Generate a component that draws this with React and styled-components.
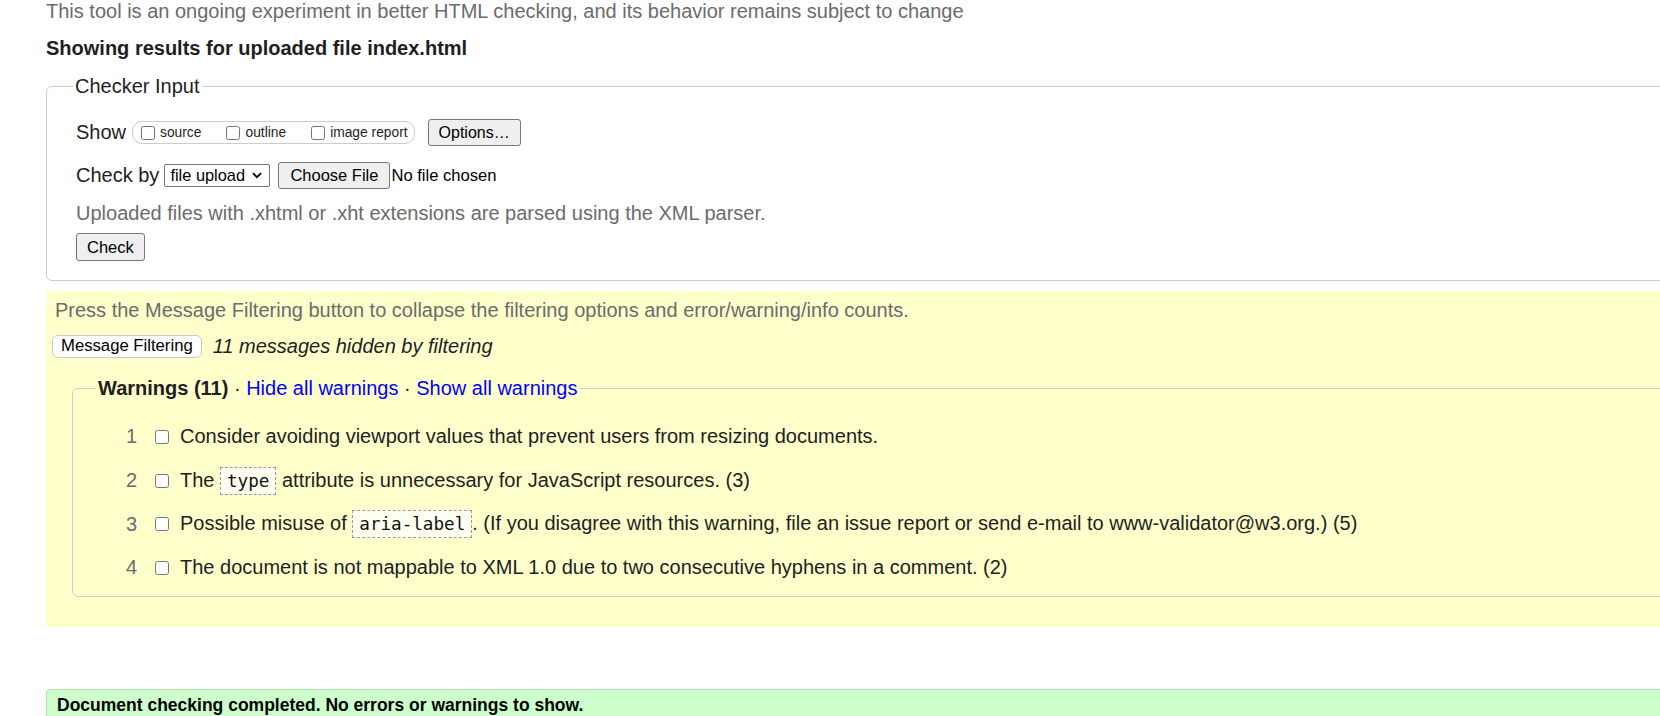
import React from "react";
import styled, { createGlobalStyle } from "styled-components";

const GlobalStyle = createGlobalStyle`
  html, body {
    margin: 0;
    padding: 0;
    background: #fff;
    overflow: hidden;
  }
  body {
    font-family: "Liberation Sans", Arial, sans-serif;
    color: #222;
  }
`;

const Page = styled.div`
  width: 1760px;
  padding-left: 46px;
`;

const Intro = styled.p`
  margin: 0;
  font-size: 20px;
  line-height: 23px;
  color: #6b6b6b;
`;

const Details = styled.p`
  margin: 14px 0 0;
  font-size: 20px;
  line-height: 23px;
  font-weight: bold;
  color: #1e1e1e;
`;

const Fieldset = styled.fieldset`
  margin: ${({ $mt }) => $mt || 0}px 0 0 ${({ $ml }) => $ml || 0}px;
  min-width: 0;
  border: 1px solid #ccc;
  border-radius: 6px;
  padding: 0 0 ${({ $pb }) => $pb}px ${({ $pl }) => $pl}px;
`;

const Legend = styled.legend`
  font-size: 20px;
  line-height: 23px;
  padding: 0 2px;
  margin-left: -3px;
  color: #1e1e1e;
  white-space: pre;
  font-weight: ${({ $bold }) => ($bold ? "bold" : "normal")};
`;

const Row = styled.div`
  display: flex;
  align-items: center;
  height: ${({ $h }) => $h || 27}px;
  margin-top: ${({ $mt }) => $mt || 0}px;
  font-size: 20px;
  color: #1e1e1e;
  white-space: nowrap;
`;

const Muted = styled.span`
  color: #6b6b6b;
`;

const ShowGroup = styled.span`
  display: inline-flex;
  align-items: center;
  box-sizing: border-box;
  height: 23px;
  margin-left: 6px;
  padding: 0 6px 0 8px;
  border: 1px solid #ccc;
  border-radius: 10px;
  font-size: 13.8px;
`;

const ShowItem = styled.label`
  display: inline-flex;
  align-items: center;
  margin-right: ${({ $last }) => ($last ? 0 : 25)}px;
`;

const Box = styled.input.attrs({ type: "checkbox" })`
  width: 14px;
  height: 14px;
  margin: 0 ${({ $gap }) => $gap}px 0 0;
  flex: none;
`;

const Button = styled.button`
  box-sizing: border-box;
  height: ${({ $h }) => $h || 27}px;
  margin-left: ${({ $ml }) => $ml || 0}px;
  padding: 0 ${({ $px }) => $px || 10}px;
  font-family: "Liberation Sans", Arial, sans-serif;
  font-size: ${({ $fs }) => $fs || 16}px;
  color: #000;
  background: #efefef;
  border: 1px solid #767676;
  border-radius: 3px;
`;

const Select = styled.span`
  display: inline-flex;
  align-items: center;
  justify-content: space-between;
  box-sizing: border-box;
  width: 106px;
  height: 23px;
  margin-left: 5px;
  padding: 0 7px 0 5px;
  font-size: 16.4px;
  color: #000;
  background: #fff;
  border: 1px solid #767676;
  border-radius: 2px;
`;

const FileName = styled.span`
  margin-left: 1px;
  font-size: 16.6px;
  color: #000;
`;

const Filters = styled.section`
  margin-top: 10px;
  padding: 8px 0 30px 6px;
  background: #ffffcc;
`;

const Hint = styled.p`
  margin: 0 0 0 3px;
  font-size: 20px;
  line-height: 23px;
  color: #6b6b6b;
`;

const FilterButton = styled.button`
  box-sizing: border-box;
  height: 23px;
  padding: 0 8px;
  font-family: "Liberation Sans", Arial, sans-serif;
  font-size: 16.7px;
  color: #000;
  background: #fff;
  border: 1px solid #c8c8c8;
  border-radius: 6px;
`;

const Hidden = styled.em`
  margin-left: 11px;
  font-size: 20px;
  color: #1e1e1e;
`;

const Dot = styled.span`
  font-weight: normal;
`;

const Link = styled.a`
  color: #0000ff;
  text-decoration: none;
  font-weight: normal;
`;

const Item = styled.div`
  display: flex;
  align-items: center;
  height: 43.7px;
  font-size: 20px;
  color: #1e1e1e;
  white-space: nowrap;
`;

const Num = styled.span`
  width: 38px;
  margin-right: 18px;
  text-align: right;
  color: #6b6b6b;
`;

const Code = styled.code`
  display: inline-block;
  padding: 3px 6px;
  font-family: "DejaVu Sans Mono", "Liberation Mono", monospace;
  font-size: 17.6px;
  line-height: 20px;
  color: #111;
  background: #fffff2;
  border: 1px dashed #999;
`;

const Done = styled.div`
  margin-top: 62px;
  padding: 5px 0 8px 10px;
  font-size: 17.5px;
  font-weight: bold;
  color: #000;
  background: #ccffcc;
  border: 1px solid #b5dcb5;
  border-radius: 4px;
`;

const Chevron = () => (
  <svg width="10" height="7" viewBox="0 0 10 7">
    <path d="M1 1.2 L5 5.2 L9 1.2" fill="none" stroke="#000" strokeWidth="1.8" />
  </svg>
);

const warnings = [
  ["Consider avoiding viewport values that prevent users from resizing documents."],
  ["The ", { code: "type" }, " attribute is unnecessary for JavaScript resources. (3)"],
  [
    "Possible misuse of ",
    { code: "aria-label" },
    ". (If you disagree with this warning, file an issue report or send e-mail to www-validator@w3.org.) (5)",
  ],
  ["The document is not mappable to XML 1.0 due to two consecutive hyphens in a comment. (2)"],
];

export default function App() {
  return (
    <>
      <GlobalStyle />
      <Page>
        <Intro>
          This tool is an ongoing experiment in better HTML checking, and its behavior remains subject to change
        </Intro>
        <Details>Showing results for uploaded file index.html</Details>

        <Fieldset $mt={15} $pl={29} $pb={19}>
          <Legend>Checker Input</Legend>
          <Row $mt={21}>
            Show
            <ShowGroup>
              <ShowItem>
                <Box $gap={5} />
                source
              </ShowItem>
              <ShowItem>
                <Box $gap={5} />
                outline
              </ShowItem>
              <ShowItem $last>
                <Box $gap={5} />
                image report
              </ShowItem>
            </ShowGroup>
            <Button $ml={13}>Options…</Button>
          </Row>
          <Row $mt={16}>
            Check by
            <Select>
              file upload
              <Chevron />
            </Select>
            <Button $ml={8} $fs={16.5} $px={11}>Choose File</Button>
            <FileName>No file chosen</FileName>
          </Row>
          <Row $mt={12} $h={24}>
            <Muted>Uploaded files with .xhtml or .xht extensions are parsed using the XML parser.</Muted>
          </Row>
          <Row $mt={8} $h={28}>
            <Button $h={28} $fs={16.5} $px={10}>Check</Button>
          </Row>
        </Fieldset>

        <Filters>
          <Hint>Press the Message Filtering button to collapse the filtering options and error/warning/info counts.</Hint>
          <Row $mt={12} $h={24}>
            <FilterButton>Message Filtering</FilterButton>
            <Hidden>11 messages hidden by filtering</Hidden>
          </Row>
          <Fieldset $mt={19} $ml={20} $pl={26} $pb={6}>
            <Legend $bold>
              Warnings (11)
              <Dot> · </Dot>
              <Link href="#">Hide all warnings</Link>
              <Dot> · </Dot>
              <Link href="#">Show all warnings</Link>
            </Legend>
            <div style={{ height: 15 }} />
            {warnings.map((parts, i) => (
              <Item key={i}>
                <Num>{i + 1}</Num>
                <Box $gap={11} />
                <span>
                  {parts.map((p, j) => (typeof p === "string" ? p : <Code key={j}>{p.code}</Code>))}
                </span>
              </Item>
            ))}
          </Fieldset>
        </Filters>

        <Done>Document checking completed. No errors or warnings to show.</Done>
      </Page>
    </>
  );
}
